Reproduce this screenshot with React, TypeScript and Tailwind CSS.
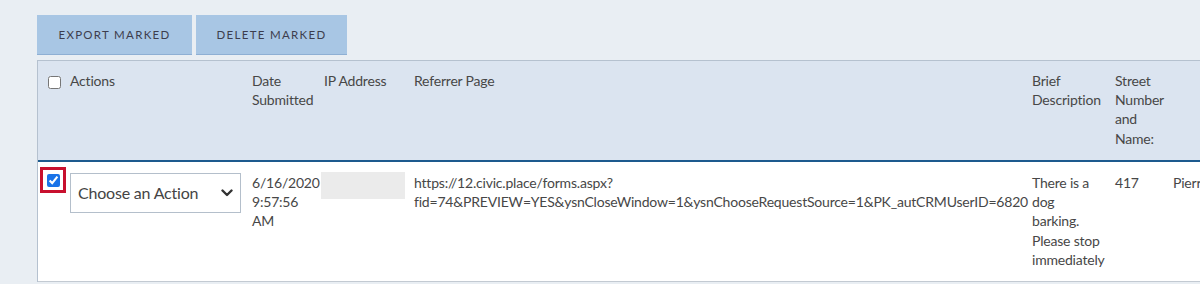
import React from "react";

const font = { fontFamily: 'Lato, "Open Sans", "Liberation Sans", sans-serif' };

function Chevron() {
  return (
    <svg width="12" height="8" viewBox="0 0 12 8" className="shrink-0">
      <path d="M1.5 1.5 L6 6 L10.5 1.5" fill="none" stroke="#333" strokeWidth="2.4" strokeLinecap="round" strokeLinejoin="round" />
    </svg>
  );
}

export default function App() {
  return (
    <div
      className="w-[1200px] h-[284px] overflow-hidden bg-[#e9eef3] text-[#474747] font-['Lato','Open_Sans',sans-serif]"
      style={font}
    >
      <div className="pl-[37px] pt-[15px]">
        <div className="flex gap-[4px]">
          <button className="w-[155px] h-[40px] bg-[#a8c6e4] border-b border-[#8eafd3] text-[11.5px] tracking-[1.3px] text-[#3d3d4d] uppercase">
            Export Marked
          </button>
          <button className="w-[151px] h-[40px] bg-[#a8c6e4] border-b border-[#8eafd3] text-[11.5px] tracking-[1.3px] text-[#3d3d4d] uppercase">
            Delete Marked
          </button>
        </div>

        <div className="mt-[5px] border-l border-t border-[#b5c1cf] w-[1163px] text-[14px] leading-[19.2px] tracking-[-0.2px]">
          {/* Header */}
          <div className="flex h-[101px] bg-[#dbe4f0] pt-[10px] border-b-2 border-[#1d5a8e]">
            <div className="w-[32px] shrink-0 pl-[10px] pt-[5px]">
              <input type="checkbox" className="block w-[13px] h-[13px] m-0" />
            </div>
            <div className="w-[182px] shrink-0">Actions</div>
            <div className="w-[72px] shrink-0 pr-[4px]">Date Submitted</div>
            <div className="w-[90px] shrink-0">IP Address</div>
            <div className="w-[618px] shrink-0">Referrer Page</div>
            <div className="w-[83px] shrink-0 pr-[9px]">Brief Description</div>
            <div className="w-[58px] shrink-0 pr-[4px]">Street Number and Name:</div>
            <div className="flex-1"></div>
          </div>

          {/* Body row */}
          <div className="flex h-[120px] bg-white border-b border-[#c3cad2]">
            <div className="w-[32px] shrink-0 pl-[2px] pt-[5px]">
              <div className="w-[26px] h-[26px] border-[3px] border-[#c8102e] flex items-center justify-center">
                <input type="checkbox" defaultChecked className="block w-[13px] h-[13px] m-0 accent-[#1a73e8]" />
              </div>
            </div>
            <div className="w-[182px] shrink-0 pt-[11px]">
              <div className="w-[171px] h-[40px] border border-[#b4bfcb] bg-white flex items-center justify-between pl-[7px] pr-[7px] text-[16px] text-[#444]">
                <span>Choose an Action</span>
                <Chevron />
              </div>
            </div>
            <div className="w-[72px] shrink-0 pt-[11px] pr-[4px]">6/16/2020 9:57:56 AM</div>
            <div className="w-[90px] shrink-0 pt-[10px]">
              <div className="ml-[-3px] w-[84px] h-[27px] bg-[#ebebeb]"></div>
            </div>
            <div className="w-[618px] shrink-0 pt-[11px]">
              https://12.civic.place/forms.aspx?
              <br />
              <span className="whitespace-nowrap">
                fid=74&amp;PREVIEW=YES&amp;ysnCloseWindow=1&amp;ysnChooseRequestSource=1&amp;PK_autCRMUserID=6820
              </span>
            </div>
            <div className="w-[83px] shrink-0 pt-[11px] pr-[6px]">
              There is a<br />dog<br />barking.<br />Please stop<br />immediately
            </div>
            <div className="w-[58px] shrink-0 pt-[11px]">417</div>
            <div className="flex-1 pt-[11px] whitespace-nowrap">Pierre</div>
          </div>
        </div>
      </div>
    </div>
  );
}
